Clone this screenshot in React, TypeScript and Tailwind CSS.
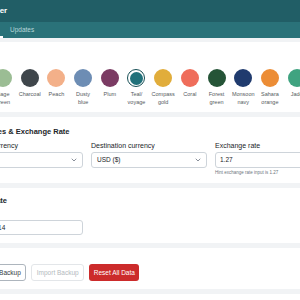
const swatches = [
  { name: ["Slate", "grey"], color: "#7d8a96" },
  { name: ["Sage", "green"], color: "#9bbd94" },
  { name: ["Charcoal"], color: "#3f464b" },
  { name: ["Peach"], color: "#f3b089" },
  { name: ["Dusty", "blue"], color: "#6d8db4" },
  { name: ["Plum"], color: "#7b3b63" },
  { name: ["Teal/", "voyage"], color: "#21717a", selected: true },
  { name: ["Compass", "gold"], color: "#e1ad3b" },
  { name: ["Coral"], color: "#ef6d5b" },
  { name: ["Forest", "green"], color: "#255437" },
  { name: ["Monsoon", "navy"], color: "#203b6e" },
  { name: ["Sahara", "orange"], color: "#ec8d36" },
  { name: ["Jade"], color: "#3fa380" },
]

const Chevron = () => (
  <svg width="6" height="4" viewBox="0 0 6 4" fill="none">
    <path d="M1 1l2 2 2-2" stroke="#6b7280" strokeWidth="0.8" strokeLinecap="round" strokeLinejoin="round" />
  </svg>
)

export default function App() {
  return (
    <div className="w-[300px] h-[300px] overflow-hidden bg-[#f1f3f5] font-['Liberation_Sans',Arial,sans-serif] text-[#212529]">
      {/* header */}
      <div className="h-[22px] bg-[#215e66] flex items-center">
        <div className="-ml-[39px] text-[8px] font-bold text-white whitespace-nowrap">Trip Planner</div>
      </div>
      <div className="h-[16px] bg-[#2a7279] flex items-stretch">
        <div className="-ml-[40px] w-[43px] relative text-[6.5px] text-white flex items-center justify-center">
          Settings
          <span className="absolute bottom-0 left-0 right-0 h-[2px] bg-white" />
        </div>
        <div className="px-[7px] text-[6.5px] text-[#b8d6d8] flex items-center">Updates</div>
      </div>

      <div className="pt-[4px] flex flex-col gap-[5px]">
        {/* colours */}
        <div className="bg-white pt-[11px] pb-[6px]">
          <div className="-ml-[33px]">
            <div className="text-[7.5px] font-bold leading-[10px]">Colour</div>
            <div className="-ml-[4px] mt-[6px] flex">
              {swatches.map((s) => (
                <div key={s.color} className="w-[26.7px] shrink-0 flex flex-col items-center">
                  {s.selected ? (
                    <div className="w-[18px] h-[18px] rounded-full border border-[#174f55] p-[1.5px] bg-white">
                      <div className="w-full h-full rounded-full" style={{ background: s.color }} />
                    </div>
                  ) : (
                    <div className="w-[18px] h-[18px] rounded-full" style={{ background: s.color }} />
                  )}
                  <div className="mt-[4px] text-[5.5px] leading-[7.5px] text-center text-[#555b61] whitespace-nowrap">
                    {s.name.map((n) => (
                      <div key={n}>{n}</div>
                    ))}
                  </div>
                </div>
              ))}
            </div>
          </div>
        </div>

        {/* currencies */}
        <div className="bg-white pt-[10px] pb-[8px]">
          <div className="-ml-[33px]">
            <div className="text-[7.5px] font-bold leading-[10px]">Currencies &amp; Exchange Rate</div>
            <div className="mt-[5px] grid grid-cols-[116px_116px_116px] gap-x-[8px]">
              <div>
                <div className="text-[7px] leading-[8px] mb-[2px]">Source currency</div>
                <div className="h-[16px] border border-[#ced4da] rounded-[3px] px-[5px] flex items-center justify-between text-[6.5px]">
                  <span>GBP (£)</span>
                  <Chevron />
                </div>
              </div>
              <div>
                <div className="text-[7px] leading-[8px] mb-[2px]">Destination currency</div>
                <div className="h-[16px] border border-[#ced4da] rounded-[3px] px-[5px] flex items-center justify-between text-[6.5px]">
                  <span>USD ($)</span>
                  <Chevron />
                </div>
              </div>
              <div>
                <div className="text-[7px] leading-[8px] mb-[2px]">Exchange rate</div>
                <div className="h-[16px] border border-[#ced4da] rounded-[3px] px-[4px] flex items-center text-[6.5px]">1.27</div>
                <div className="mt-[2px] text-[4.5px] leading-[5px] text-[#6c757d]">Hint exchange rate input is 1.27</div>
              </div>
            </div>
          </div>
        </div>

        {/* date */}
        <div className="bg-white pt-[8px] pb-[8px]">
          <div className="-ml-[33px]">
            <div className="text-[7.5px] font-bold leading-[10px]">Travel Date</div>
            <div className="mt-[4px] w-[116px]">
              <div className="text-[7px] leading-[8px] mb-[2px]">Date</div>
              <div className="h-[15px] border border-[#ced4da] rounded-[3px] px-[4px] flex items-center text-[6.5px]">2024-06-14</div>
            </div>
          </div>
        </div>

        {/* data */}
        <div className="bg-white pt-[16px] pb-[8px]">
          <div className="flex gap-[5px] -ml-[27px]">
            <button className="h-[17px] px-[4.5px] border border-[#adb5bd] rounded-[3px] text-[6.5px] text-[#343a40] bg-white">Export Backup</button>
            <button className="h-[17px] px-[4.5px] border border-[#e3e6e9] rounded-[3px] text-[6.5px] text-[#b4b9be] bg-white">Import Backup</button>
            <button className="h-[17px] px-[4.5px] rounded-[3px] text-[6.5px] text-white bg-[#cc2b2b]">Reset All Data</button>
          </div>
        </div>

        <div className="bg-white h-[20px]" />
      </div>
    </div>
  )
}
